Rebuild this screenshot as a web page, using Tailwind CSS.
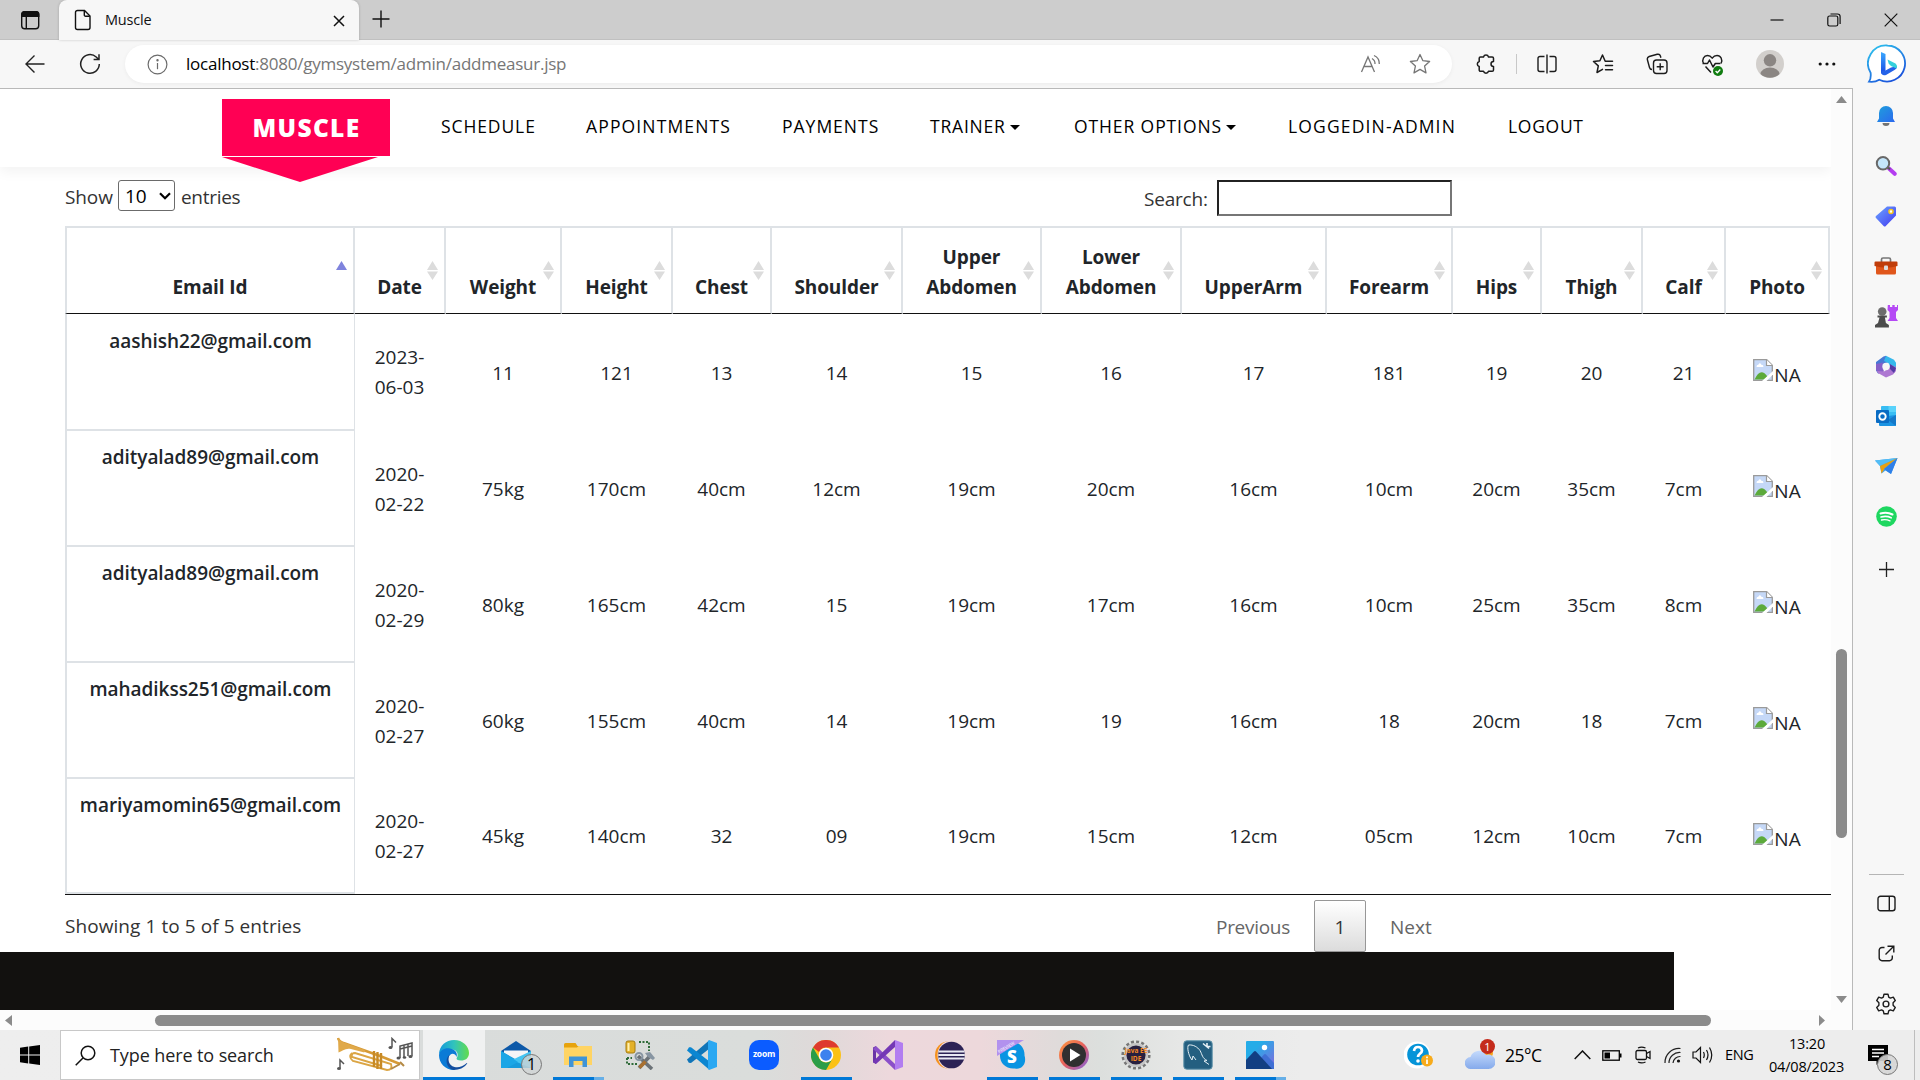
<!DOCTYPE html>
<html lang="en">
<head>
<meta charset="utf-8">
<title>Muscle</title>
<script src="https://cdn.jsdelivr.net/npm/@tailwindcss/browser@4"></script>
</head>
<body class="w-[1920px] h-[1080px] overflow-hidden flex flex-col bg-[#f7f7f7] font-['Open_Sans','Noto_Sans',sans-serif] text-[#212529]">

<!-- Tab strip -->
<div class="h-10 shrink-0 flex bg-[#cdcdcd] border-b border-[#c0c0c0]">
  <div class="w-[59px] flex items-center pl-[20px]">
    <svg class="w-5 h-5" viewBox="0 0 20 20" fill="none" stroke="#111" stroke-width="1.4"><rect x="1.7" y="1.7" width="17" height="17" rx="3"/><path d="M2 5.2V4a2.3 2.3 0 0 1 2.3-2.3h12A2.3 2.3 0 0 1 18.700 4v2.300H2z" fill="#111"/><path d="M6.300 6v12.500"/></svg>
  </div>
  <div class="w-[300px] h-10 bg-[#f7f7f7] rounded-t-lg flex items-center shadow-[0_0_3px_#0003]">
    <svg class="w-5 h-[22px] ml-[14px]" viewBox="0 0 20 22" fill="none" stroke="#111" stroke-width="1.400"><path d="M4.500 1.500h7l5.500 5.500v11.500a2 2 0 0 1-2 2H4.500a2 2 0 0 1-2-2v-15a2 2 0 0 1 2-2z"/><path d="M11.300 1.800V6a1.200 1.200 0 0 0 1.200 1.200h4.300"/></svg>
    <span class="ml-[12px] text-[14.500px] tracking-[-0.2px] text-[#111] w-[228px]">Muscle</span>
    <svg class="w-3 h-3 mt-px" viewBox="0 0 12 12" stroke="#111" stroke-width="1.500"><path d="M1 1l10 10M11 1L1 11"/></svg>
  </div>
  <svg class="w-[18px] h-[18px] ml-[13px] mt-[10px]" viewBox="0 0 18 18" stroke="#111" stroke-width="1.400"><path d="M9 .5v17M.5 9h17"/></svg>
  <div class="ml-auto flex items-center h-10 pr-[22px] gap-[43px]">
    <svg class="w-[14px] h-[14px]" viewBox="0 0 14 14" stroke="#111" stroke-width="1.200"><path d="M.5 7h13"/></svg>
    <svg class="w-[14px] h-[14px]" viewBox="0 0 14 14" fill="none" stroke="#111" stroke-width="1.200"><rect x=".8" y="3" width="10" height="10" rx="1.800"/><path d="M3.500 1h7a2.600 2.600 0 0 1 2.600 2.600V11"/></svg>
    <svg class="w-[14px] h-[14px]" viewBox="0 0 14 14" stroke="#111" stroke-width="1.200"><path d="M.7.7l12.600 12.600M13.300.7L.7 13.300"/></svg>
  </div>
</div>

<!-- Everything between tab strip and taskbar -->
<div class="h-[990px] shrink-0 flex">
  <div class="w-[1853px] shrink-0 flex flex-col">
    <!-- Address toolbar -->
    <div class="h-12 shrink-0 flex items-center">
      <svg class="w-5 h-5 ml-[25px] -mt-[1px]" viewBox="0 0 20 20" fill="none" stroke="#222" stroke-width="1.400"><path d="M19.500 10H1M9.500 1.500L1 10l8.500 8.500"/></svg>
      <svg class="w-[22px] h-[22px] ml-[34px]" viewBox="0 0 22 22" fill="none" stroke="#222" stroke-width="1.500"><path d="M20.300 11a9.300 9.300 0 1 1-3.100-7l2.600 2.500M20 1.200v5.400h-5.400"/></svg>
      <div class="ml-[24px] w-[1327px] h-[38px] bg-white rounded-full shadow-[0_1px_4px_#0000000d] flex items-center">
        <svg class="w-[21px] h-[21px] ml-[22px]" viewBox="0 0 21 21" fill="none" stroke="#6b6b6b" stroke-width="1.200"><circle cx="10.500" cy="10.500" r="9.400"/><path d="M10.500 9v6.200" /><circle cx="10.500" cy="6.200" r=".6" fill="#6b6b6b"/></svg>
        <span class="ml-[18px] w-[1174px] pb-px text-[17px] tracking-[-0.240px] text-[#767676] whitespace-nowrap"><span class="text-black">localhost</span>:8080/gymsystem/admin/addmeasur.jsp</span>
        <svg class="w-[22px] h-[20px] shrink-0" viewBox="0 0 22 20" fill="none" stroke="#767676" stroke-width="1.300"><path d="M1.500 18L8 3l6.500 15M4 12.500h8M12 4.500a6 6 0 0 1 3 5.500M14 1.500a9 9 0 0 1 5.300 8.500"/></svg>
        <svg class="w-[22px] h-[22px] ml-[27px] shrink-0" viewBox="0 0 22 22" fill="none" stroke="#767676" stroke-width="1.300" stroke-linejoin="round"><path d="M11 1.500l2.900 6.200 6.700.8-5 4.600 1.400 6.800-6-3.500-6 3.500 1.400-6.800-5-4.600 6.700-.8z"/></svg>
      </div>
      <!-- toolbar buttons -->
      <svg class="w-[22px] h-[22px] ml-[23px]" viewBox="0 0 22 22" fill="none" stroke="#1c1c1c" stroke-width="1.500" stroke-linejoin="round"><path d="M5.500 4h3a2.600 2.600 0 0 1 5 0h3.700a1.300 1.300 0 0 1 1.300 1.300V8.500a2.500 2.500 0 1 0 0 5v3.500a1.300 1.300 0 0 1-1.300 1.300h-3.700a2.600 2.600 0 0 1-5 0h-3A1.300 1.300 0 0 1 4.200 17v-3.500a2.600 2.600 0 0 1 0-5V5.300A1.300 1.300 0 0 1 5.500 4z"/></svg>
      <div class="w-px h-5 bg-[#c8c8c8] ml-[19px]"></div>
      <svg class="w-[22px] h-[20px] ml-[19px]" viewBox="0 0 22 20" fill="none" stroke="#1c1c1c" stroke-width="1.400"><path d="M8.500 2.500H4a2 2 0 0 0-2 2v11a2 2 0 0 0 2 2h4.500M13.500 2.500H18a2 2 0 0 1 2 2v11a2 2 0 0 1-2 2h-4.500M11 .5v19"/></svg>
      <svg class="w-[22px] h-[22px] ml-[34px]" viewBox="0 0 22 22" fill="none" stroke="#1c1c1c" stroke-width="1.500" stroke-linejoin="round" stroke-linecap="round"><path d="M13.200 8.200L10.500 2 7.900 7.800 1.500 8.500l4.800 4.400L5 19.500l5.500-3.200M13.500 8.200h7M13.500 12.500h7M13.500 16.800h7"/></svg>
      <svg class="w-[22px] h-[22px] ml-[32px]" viewBox="0 0 22 22" fill="none" stroke="#1c1c1c" stroke-width="1.400"><rect x="7.500" y="7" width="13.500" height="13.500" rx="3"/><path d="M14.200 10.200v7M10.700 13.700h7M6 16.500c-1.500 0-2.200-.8-2.500-2L1.400 6.800C1 5 1.700 4 3.200 3.500l8-2.200c1.600-.4 2.800.3 3.200 1.700l.5 1.700"/></svg>
      <svg class="w-[23px] h-[23px] ml-[33px]" viewBox="0 0 23 23" fill="none" stroke="#1c1c1c" stroke-width="1.500" stroke-linejoin="round"><path d="M2.500 10.500C.5 6.500 3 2.500 6.500 2.500c2 0 3.500 1 4.700 2.600C12.400 3.500 14 2.500 16 2.500c3.700 0 6 4 4 8M1.500 10.500h5l2-3.500 3.500 7 2.300-3.500h5M4.500 13.500l5.500 6"/><circle cx="17" cy="18" r="5" fill="#107c10" stroke="none"/><path d="M14.600 18l1.700 1.700 3-3.200" stroke="#fff" stroke-width="1.300"/></svg>
      <svg class="w-7 h-7 ml-[32px]" viewBox="0 0 28 28"><circle cx="14" cy="14" r="14" fill="#d2cfcc"/><circle cx="14" cy="10.300" r="6.200" fill="#8b8683"/><path d="M4.500 24a9.500 6.500 0 0 1 19 0A14 14 0 0 1 4.500 24z" fill="#8b8683"/></svg>
      <svg class="w-[18px] h-1 ml-[34px]" viewBox="0 0 18 4" fill="#111"><circle cx="2.200" cy="2" r="1.600"/><circle cx="9" cy="2" r="1.600"/><circle cx="15.800" cy="2" r="1.600"/></svg>
    </div>

    <!-- Viewport -->
    <div class="h-[942px] shrink-0 flex flex-col border-t border-r border-[#b9b9b9] bg-[#fcfcfc]">
      <div class="h-[921px] shrink-0 flex">
        <main class="w-[1831px] h-[921px] shrink-0 overflow-hidden bg-white flex flex-col">
          <!-- Site header -->
          <header class="relative z-10 h-[78px] shrink-0 bg-white shadow-[0_5px_12px_#0000000d] flex pl-[222px]">
            <div class="relative mt-[10px] w-[168px] h-[57px] bg-[#ff0054] flex items-center justify-center">
              <span class="text-white font-extrabold text-[24.500px] tracking-[1.300px] leading-none pt-[2px] pl-px">MUSCLE</span>
              <svg class="absolute left-0 top-[58px] w-[156px] h-[25px]" viewBox="0 0 156 25"><path d="M0 0h156L78 25z" fill="#ff0054"/></svg>
            </div>
            <nav class="flex h-[76px] items-center ml-[51px] text-[17.500px] font-medium text-black whitespace-nowrap tracking-[1.150px] leading-none">
              <a class="w-[145px] tracking-[0.900px]">SCHEDULE</a>
              <a class="w-[196px]">APPOINTMENTS</a>
              <a class="w-[148px] tracking-[1px]">PAYMENTS</a>
              <a class="w-[144px] flex items-center tracking-[0.800px]">TRAINER<i class="ml-[4px] border-x-[5px] border-x-transparent border-t-[5px] border-t-black"></i></a>
              <a class="w-[214px] flex items-center tracking-[0.900px]">OTHER OPTIONS<i class="ml-[4px] border-x-[5px] border-x-transparent border-t-[5px] border-t-black"></i></a>
              <a class="w-[220px]">LOGGEDIN-ADMIN</a>
              <a class="tracking-[0.700px]">LOGOUT</a>
            </nav>
          </header>

          <!-- Length + search controls -->
          <div class="h-[59px] shrink-0 flex pl-[65px] pt-[13px] text-[19px] text-[#333]">
            <span class="w-[53px] leading-[34px] tracking-[-0.1px]">Show</span>
            <div class="w-[57px] h-[31px] border border-[#6b6b6b] rounded-[3px] bg-white text-black flex items-center pl-[6px]">
              <span class="w-[34px] leading-none pt-[2px]">10</span>
              <svg class="w-[12px] h-[8px]" viewBox="0 0 12 8" fill="none" stroke="#000" stroke-width="2.200"><path d="M1 1.200l5 5 5-5"/></svg>
            </div>
            <span class="ml-[6px] w-[963px] leading-[34px] tracking-[-0.3px]">entries</span>
            <span class="w-[73px] leading-[38px] tracking-[-0.2px]">Search:</span>
            <div class="w-[235px] h-[36px] bg-white border-2 border-t-[#222] border-l-[#222] border-b-[#767676] border-r-[#767676]"></div>
          </div>

          <table class="ml-[65px] w-[1765px] shrink-0 table-fixed border-separate border-spacing-0 text-[19px] leading-[30px] text-center">
            <colgroup>
              <col class="w-[290px]"><col class="w-[91px]"><col class="w-[116px]"><col class="w-[111px]"><col class="w-[99px]"><col class="w-[131px]"><col class="w-[139px]"><col class="w-[140px]"><col class="w-[145px]"><col class="w-[126px]"><col class="w-[89px]"><col class="w-[101px]"><col class="w-[83px]"><col class="w-[104px]">
            </colgroup>
            <thead><tr id="head"></tr></thead>
            <tbody id="rows"></tbody>
          </table>

          <!-- Info + pagination -->
          <div class="ml-[65px] h-[58px] shrink-0 flex border-t border-[#111] text-[19px] text-[#333]">
            <span class="w-[1151px] leading-[62px] tracking-[0.070px]">Showing 1 to 5 of 5 entries</span>
            <span class="w-[98px] leading-[64px] text-[#666] tracking-[-0.3px]">Previous</span>
            <div class="mt-[5px] w-[52px] h-[52px] border border-[#979797] rounded-[2px] bg-linear-to-b from-white to-[#dcdcdc] text-center leading-[53px]">1</div>
            <span class="ml-[24px] leading-[64px] text-[#666]">Next</span>
          </div>
          <div class="w-[1674px] h-[58px] shrink-0 bg-[#12110f]"></div>
        </main>
        <!-- vertical scrollbar -->
        <div class="w-[21px] flex flex-col items-center pt-[7px]">
          <svg class="w-[11px] h-[7px]" viewBox="0 0 11 7"><path d="M5.500 0L11 7H0z" fill="#8b8b8b"/></svg>
          <div class="mt-[546px] w-[11px] h-[189px] rounded-full bg-[#8b8b8b]"></div>
          <svg class="mt-[158px] w-[11px] h-[7px]" viewBox="0 0 11 7"><path d="M0 0h11L5.500 7z" fill="#8b8b8b"/></svg>
        </div>
      </div>
      <!-- horizontal scrollbar -->
      <div class="h-5 flex items-center">
        <svg class="ml-[5px] w-[7px] h-[11px]" viewBox="0 0 7 11"><path d="M7 0v11L0 5.500z" fill="#8b8b8b"/></svg>
        <div class="ml-[143px] w-[1556px] h-[11px] rounded-full bg-[#8b8b8b]"></div>
        <svg class="ml-[108px] w-[6px] h-[11px]" viewBox="0 0 6 11"><path d="M0 0v11l6-5.500z" fill="#8b8b8b"/></svg>
      </div>
    </div>
  </div>

  <!-- Browser sidebar -->
  <aside class="w-[67px] flex flex-col items-center pr-px">
    <svg class="w-10 h-[41px] mt-[4px] mb-[6px] ml-px shrink-0" viewBox="0 0 40 41">
      <defs><linearGradient id="bg1" x1="0" y1="0" x2="0.600" y2="1"><stop offset="0" stop-color="#2fc8ee"/><stop offset="1" stop-color="#1b55dc"/></linearGradient><linearGradient id="bg2" x1="0" y1="0" x2="0" y2="1"><stop offset="0" stop-color="#3aa9ff"/><stop offset="1" stop-color="#174ae4"/></linearGradient></defs>
      <path d="M20.500 1.500a18 18 0 1 1-8.300 34.200c-3 2-6 2.500-10.200 2 2-3 2-6 1.600-9A18 18 0 0 1 20.500 1.500z" fill="#fff" stroke="url(#bg1)" stroke-width="1.800"/>
      <path d="M14 8l4.500 2v17l-4.500 2.700z" fill="url(#bg2)"/><path d="M18.500 26.500L24 23.500l6-1.500c0 2-1 3.200-2.500 4L19 31c-3 1.200-5-.7-5-3.500z" fill="#2462e8"/><path d="M20.500 15.500l8 4c1.500 1.500 2 3 1 5L24 22l-2.300-2.200z" fill="#35d0dc"/>
    </svg>
    <div class="h-[50px] shrink-0 flex items-center"><svg class="w-[22px] h-[22px]" viewBox="0 0 22 22"><defs><linearGradient id="be" x1="0" y1="0" x2="1" y2="1"><stop offset="0" stop-color="#1fa0dc"/><stop offset="1" stop-color="#2b68ee"/></linearGradient></defs><path d="M11 1a7 7 0 0 1 7 7v5.500l2 3.500H2l2-3.500V8a7 7 0 0 1 7-7z" fill="url(#be)"/><path d="M7.500 18h7a3.500 3 0 0 1-7 0z" fill="#737373"/></svg></div>
    <div class="h-[50px] shrink-0 flex items-center"><svg class="w-[22px] h-[22px]" viewBox="0 0 22 22"><path d="M14 13.500l5.700 5.300" stroke="#b43df0" stroke-width="4" stroke-linecap="round"/><path d="M12.500 12l2.500 2.500" stroke="#555" stroke-width="2"/><circle cx="8" cy="8.300" r="6.200" fill="#c4e6fb" stroke="#686868" stroke-width="2"/></svg></div>
    <div class="h-[50px] shrink-0 flex items-center"><svg class="w-[22px] h-[22px]" viewBox="0 0 22 22"><defs><linearGradient id="tg" x1="0" y1="0" x2="1" y2="1"><stop offset="0" stop-color="#6aa5ff"/><stop offset="1" stop-color="#4338f0"/></linearGradient></defs><path d="M12 1.500h7.500A1.500 1.500 0 0 1 21 3v7.500L10.800 21a1.500 1.500 0 0 1-2.200 0L1 13a1.500 1.500 0 0 1 0-2z" fill="url(#tg)"/><circle cx="16" cy="6.500" r="2" fill="#fff" stroke="#f6c51d" stroke-width="1.600"/></svg></div>
    <div class="h-[50px] shrink-0 flex items-center"><svg class="w-[24px] h-[20px]" viewBox="0 0 24 20"><path d="M7.500 6V3.500a1.500 1.500 0 0 1 1.500-1.500h6a1.500 1.500 0 0 1 1.500 1.500V6" fill="none" stroke="#777" stroke-width="1.700"/><path d="M2 9h20v8a1.500 1.500 0 0 1-1.500 1.500h-17A1.500 1.500 0 0 1 2 17z" fill="#e0561b"/><path d="M1.500 5.500h21a1 1 0 0 1 1 1V10q-11 3.500-23 0V6.500a1 1 0 0 1 1-1z" fill="#c03d0a"/><rect x="10" y="9.500" width="4" height="4.500" rx="1" fill="#ddd"/></svg></div>
    <div class="h-[50px] shrink-0 flex items-center"><svg class="w-[24px] h-[24px]" viewBox="0 0 24 24"><path d="M13.800 1h2.200v2h2.300V1h2.400v2H23V1h1v5l-2 2v6l2 3H13.500l2-3V8l-2-2z" fill="#b549f5"/><circle cx="8.200" cy="7.500" r="4.300" fill="#6c6c6c"/><path d="M3.500 11.500h9.400v2h-2l1 5.500 3 2v2.500H1V21l3-2 1.500-5.500h-2z" fill="#4c4c4c"/></svg></div>
    <div class="h-[50px] shrink-0 flex items-center"><svg class="w-[22px] h-[23px]" viewBox="0 0 22 23"><path d="M1 7L8.500 1.500 11 .8l2 6.200-5 3v7l-5 1.500-2-3z" fill="#4678d4"/><path d="M1 9v6l2.500 3.500L9 16.500l-1.500-5L8 7.500z" fill="#8560c8"/><path d="M11 .8l8 4 2 3v6l-6-1-1.500-4.500L9 6z" fill="#35b8ec"/><path d="M21 12v4l-3 3.500-7 3-8-4.500-1-2 7 .5 5-3.500 1-3.500z" fill="#ae78d2"/><path d="M15 9l6 4-2 5-4-4z" fill="#523ba5"/><circle cx="11" cy="11.500" r="3.700" fill="#f7f7f7"/></svg></div>
    <div class="h-[50px] shrink-0 flex items-center"><svg class="w-[22px] h-[22px]" viewBox="0 0 22 22"><rect x="6" y="1" width="15" height="13" rx="1" fill="#38bdf3"/><path d="M13.500 1H20a1 1 0 0 1 1 1v5h-7.500z" fill="#58d2fb"/><path d="M4 12l17-2v10a1 1 0 0 1-1 1H5a1 1 0 0 1-1-1z" fill="#1a93e2"/><path d="M21 10v11l-8-6z" fill="#1478c9"/><rect x="1" y="5" width="13" height="13" rx="1" fill="#0a6cc4"/><circle cx="7.500" cy="11.500" r="3.200" fill="none" stroke="#fff" stroke-width="1.900"/></svg></div>
    <div class="h-[50px] shrink-0 flex items-center"><svg class="w-[23px] h-[18px]" viewBox="0 0 23 18"><path d="M0 3.500L22.500 1 16 17l-5.500-3.500-4 3L5 9z" fill="#3da3f0"/><path d="M0 3.500L22.500 1 5 9z" fill="#53bdf5"/><path d="M22.500 1L5 9l1.500 7.500L10 11z" fill="#e8a012"/><path d="M22.500 1L16 17l-7-5z" fill="#2f7fe8"/></svg></div>
    <div class="h-[50px] shrink-0 flex items-center"><svg class="w-[21px] h-[21px]" viewBox="0 0 21 21" fill="none" stroke="#fff" stroke-linecap="round"><circle cx="10.500" cy="10.500" r="10.300" fill="#1ed760" stroke="none"/><path d="M4.500 7.500q6.500-2 12 1" stroke-width="2"/><path d="M5 11q5.500-1.500 10.200.8" stroke-width="1.600"/><path d="M5.500 14q4.500-1 8.500.9" stroke-width="1.300"/></svg></div>
    <svg class="mt-[21px] w-[15px] h-[15px] shrink-0" viewBox="0 0 15 15" stroke="#222" stroke-width="1.300"><path d="M7.500 0v15M0 7.500h15"/></svg>
    <div class="mt-auto w-[35px] h-px bg-[#b5b5b5] mb-[3px]"></div>
    <div class="h-[50px] shrink-0 flex items-center"><svg class="w-[19px] h-[17px]" viewBox="0 0 19 17" fill="none" stroke="#1c1c1c" stroke-width="1.400"><rect x="1" y="1.200" width="17" height="14.500" rx="2.500"/><path d="M12.300 1v15"/></svg></div>
    <div class="h-[50px] shrink-0 flex items-center"><svg class="w-[17px] h-[17px]" viewBox="0 0 17 17" fill="none" stroke="#1c1c1c" stroke-width="1.400"><path d="M6.500 2.500H4A2.800 2.800 0 0 0 1.200 5.300v7.500A2.800 2.800 0 0 0 4 15.700h7.500a2.800 2.800 0 0 0 2.800-2.900V10.500M9.500 1.200h6.300v6.300M15.500 1.500L7.500 9.500"/></svg></div>
    <div class="h-[52px] pb-[1px] shrink-0 flex items-center"><svg class="w-[22px] h-[22px]" viewBox="0 0 22 22" fill="none" stroke="#1c1c1c" stroke-width="1.400" stroke-linejoin="round"><path d="M9 1.200h4l.7 2.900 1.700 1 2.900-.9 2 3.400-2.200 2.100v2.600l2.200 2.100-2 3.400-2.900-.9-1.700 1-.7 2.900H9l-.7-2.900-1.700-1-2.900.9-2-3.400 2.200-2.100V9.700L1.700 7.600l2-3.400 2.900.9 1.700-1z"/><circle cx="11" cy="11" r="2.900"/></svg></div>
  </aside>
</div>

<!-- Taskbar -->
<footer class="h-[50px] shrink-0 flex bg-linear-to-r from-[#eeeeee] from-0% via-[#ececec] via-65% to-[#eeeeee]">
  <div class="w-[60px] flex items-center justify-center shrink-0"><svg class="w-5 h-5" viewBox="0 0 20 20" fill="#000"><path d="M0 2.800l8.200-1.200v7.900H0zM9.200 1.400L20 0v9.500H9.200zM0 10.500h8.200v7.900L0 17.200zM9.200 10.500H20V20L9.200 18.600z"/></svg></div>
  <div class="w-[360px] shrink-0 bg-white border border-[#c8c8c8] flex items-center">
    <svg class="w-[21px] h-[21px] ml-[14px]" viewBox="0 0 21 21" fill="none" stroke="#111" stroke-width="1.500"><circle cx="13" cy="8" r="6.800"/><path d="M8.200 12.800L.7 20.300"/></svg>
    <span class="ml-[14px] w-[227px] text-[18px] text-[#222] tracking-[-0.1px] whitespace-nowrap">Type here to search</span>
    <svg class="w-[77px] h-[36px]" viewBox="0 0 77 36" fill="none"><path d="M1 1q1 4 7 5.500L43 19l20 8" stroke="#d69a35" stroke-width="2.500"/><path d="M1 .5C3 5 8 5.500 14 8l14 5-.7 2.500L14 12C9 10.500 5 14 1.500 15.500z" fill="#e0a94a"/><path d="M15 16q-4 4 1 8l34 9q6 0 4-6L18 16q-4 0-3 4l30 9" stroke="#dba544" stroke-width="1.900"/><path d="M37 14v16M40.500 15v17M44 16v16" stroke="#c78a26" stroke-width="2.400"/><path d="M54 32l9-5M63 25l4 4" stroke="#b58a45" stroke-width="2"/><g stroke="#555" stroke-width="1.500"><path d="M55 10V1.500l4 4M63 21V9l12-3v13M67 20V8M71 19V7M63 12l12-3M3 31v-8l4 4"/></g><g fill="#555"><ellipse cx="53.500" cy="10.500" rx="2" ry="1.500"/><ellipse cx="61.500" cy="21" rx="2" ry="1.500"/><ellipse cx="67.500" cy="20.500" rx="1.800" ry="1.300"/><ellipse cx="73.500" cy="19.500" rx="2" ry="1.500"/><ellipse cx="2" cy="31.500" rx="2" ry="1.500"/></g></svg>
  </div>
  <!-- pinned and running applications -->
  <div class="w-[880px] shrink-0 flex pl-[3px] bg-[linear-gradient(90deg,#d9dcdb_0,#dadddb_340px,#dfd9d9_400px,#edd8dc_470px,#edd8db_560px,#dfdbda_640px,#dcdfdd_680px,#e6e7e6_760px,#ececec_880px)]">
    <div class="relative w-[62px] flex items-center justify-center bg-[#f0f1f1] border-b-[3px] border-[#0078d7] pt-[3px]"><svg class="w-[30px] h-[30px]" viewBox="0 0 30 30"><defs><linearGradient id="ed" x1="0" y1="0.300" x2="1" y2="0.300"><stop offset="0" stop-color="#1399dc"/><stop offset=".5" stop-color="#31c3bc"/><stop offset="1" stop-color="#63dc4c"/></linearGradient></defs><path d="M0 14C.5 5.500 7 0 15 0c9 0 15 6.500 15 13 0 5-3.500 7.500-8 7.500-3.500 0-5-1-4.300-2.500 2.800-4.500-.7-8.800-5.700-8.800C6 9.200 2 12 0 14z" fill="url(#ed)"/><path d="M0 15C1 10 6 7.700 11 8.500c5 .8 8 4.500 6.500 8.500-1-3-4-4-6.200-2.300-3.300 2.500-3 8.500 1.200 12 2 1.700 4 3 2.500 3.300C6 30 0 23 0 15z" fill="#0b7bd6"/><path d="M11 14.500c-3 4-1.500 11 4.500 12.500 4 1 8-.3 12-3.800.5-.5 1 0 .5.600C25 28 20 30 15 30 9 29 6.500 23 8 18.500c.7-2 1.700-3.200 3-4z" fill="#134d9e"/></svg></div>
    <div class="relative w-[62px] flex items-center justify-center"><svg class="w-[30px] h-[30px]" viewBox="0 0 30 30"><path d="M0 11L15 1l15 10v17H0z" fill="#0d59a8"/><path d="M3 10.500h24v9L15 23 3 19z" fill="#f4f5f7"/><path d="M0 11l30 17H0z" fill="#179bdc"/><path d="M30 11v17L11 20z" fill="#43c4f2"/><path d="M0 28V11l17 11-11 6z" fill="#1ba6e6"/></svg><span class="absolute left-[36px] top-[24px] w-[21px] h-[21px] rounded-full border border-[#777] bg-[#d0d5d5]/80 text-black text-[16px] leading-[19px] text-center">1</span></div>
    <div class="relative w-[62px] flex items-center justify-center"><svg class="w-[28px] h-[24px]" viewBox="0 0 28 24"><path d="M0 1.500A1.500 1.500 0 0 1 1.500 0h10l2 3H28v18H0z" fill="#e7a30d"/><path d="M0 4.500h13l1.500-1.500H28v19H0z" fill="#ffd463"/><path d="M5 13.500h18V24h-4.500v-6h-9v6H5z" fill="#3f94d7"/></svg><i class="absolute bottom-0 left-[6px] w-[41px] h-[3px] bg-[#0078d7]"></i><i class="absolute bottom-0 left-[47px] w-[10px] h-[3px] bg-[#66afe7]"></i></div>
    <div class="w-[62px] flex items-center justify-center"><svg class="w-[30px] h-[30px]" viewBox="0 0 30 30"><rect x="1" y="1" width="9" height="12" rx="2" fill="#e3b12a" stroke="#a67c10"/><path d="M3.500 3v8" stroke="#fff0b0" stroke-width="2"/><path d="M14 2h10v9M2 18v6h10M2 18h5" stroke="#2e6b39" stroke-width="2" stroke-dasharray="2 1.500" fill="none"/><path d="M14 28l11-12M13 16l14 13" stroke="#6b7277" stroke-width="3.600"/><path d="M14.500 27.500l6-6" stroke="#a9702f" stroke-width="3.600"/><path d="M20 13l5-1 5 6-2 2-5-3z" fill="#8795a2"/><circle cx="14" cy="16.500" r="3.500" fill="none" stroke="#8795a2" stroke-width="2"/></svg></div>
    <div class="w-[62px] flex items-center justify-center"><svg class="w-[30px] h-[30px]" viewBox="0 0 30 30"><path d="M22 .5L0 19.500l1.800 3.200L4 23 22.500 8.500z" fill="#1075b8"/><path d="M0 10.500L2 7.300l2-.1L22.500 21.500 22 29.500z" fill="#0b86d1"/><path d="M22 0l8 3v24l-8 3-1-1.200V1.200z" fill="#2aa8f2"/></svg></div>
    <div class="w-[62px] flex items-center justify-center"><div class="w-[30px] h-[30px] rounded-[10px] bg-[#0b5cff] text-white text-[8.500px] font-bold leading-[28px] text-center tracking-[-0.2px]">zoom</div></div>
    <div class="relative w-[62px] flex items-center justify-center"><svg class="w-[30px] h-[30px]" viewBox="0 0 30 30"><circle cx="15" cy="15" r="15" fill="#fbc116"/><path d="M2 7.500A15 15 0 0 1 28 7.500H15A7.500 7.500 0 0 0 8 12z" fill="#de3a2e"/><path d="M2 7.500A15 15 0 0 0 15 30l6.500-11.200A7.500 7.500 0 0 1 8.500 18.800z" fill="#2a9d48"/><circle cx="15" cy="15" r="7.300" fill="#fff"/><circle cx="15" cy="15" r="5.800" fill="#3c82ee"/></svg><i class="absolute bottom-0 left-[6px] w-[51px] h-[3px] bg-[#0078d7]"></i></div>
    <div class="w-[62px] flex items-center justify-center"><svg class="w-[30px] h-[30px]" viewBox="0 0 30 30"><path d="M0 7.500l3-1.500v18l-3-1.500z" fill="#6a34a6"/><path d="M3 6l19 18v6L0 9z" fill="#8b4fc9"/><path d="M3 24L22 7V0L0 21.500z" fill="#7437b5"/><path d="M22 0l8 3v24l-8 3z" fill="#b27df0"/></svg></div>
    <div class="w-[62px] flex items-center justify-center"><svg class="w-[30px] h-[28px]" viewBox="0 0 30 28"><ellipse cx="13" cy="14" rx="13" ry="13.500" fill="#f6921e"/><ellipse cx="15" cy="14" rx="12.500" ry="14" fill="#eed8dc"/><circle cx="16.500" cy="14" r="13.300" fill="#2c2255"/><path d="M3.500 10.500h26M3.300 14h26.500M3.500 17.500h26" stroke="#e8e8f2" stroke-width="1.800"/></svg></div>
    <div class="relative w-[62px] flex items-center justify-center"><div class="relative w-[30px] h-[30px]"><svg class="absolute inset-0" viewBox="0 0 30 30"><path d="M3 9a8 8 0 0 1 9-7c9-1.500 16 5 15.500 13.500C30 23 25 30 18 28.500 9 29.500 2.500 23 3 15z" fill="#0a94e2"/><path d="M0 0h27L0 16z" fill="#b291ee"/></svg><span class="absolute left-[10px] top-[10px] text-white font-extrabold text-[17px] leading-[14px]">S</span><span class="absolute left-0 top-[5px] text-white text-[4.500px] leading-none -rotate-[30deg]">PREVIEW</span></div><i class="absolute bottom-0 left-[6px] w-[51px] h-[3px] bg-[#0078d7]"></i></div>
    <div class="relative w-[62px] flex items-center justify-center"><svg class="w-[30px] h-[30px]" viewBox="0 0 30 30"><defs><linearGradient id="mp" x1="0" y1="0" x2="1" y2="1"><stop offset="0" stop-color="#ff9a3c"/><stop offset=".5" stop-color="#e5605e"/><stop offset="1" stop-color="#7d62e6"/></linearGradient></defs><circle cx="15" cy="15" r="15" fill="url(#mp)"/><circle cx="15" cy="15" r="12" fill="#303030"/><path d="M11 8.500l10.500 6.500L11 21.500z" fill="#fff"/></svg><i class="absolute bottom-0 left-[6px] w-[51px] h-[3px] bg-[#0078d7]"></i></div>
    <div class="relative w-[62px] flex items-center justify-center"><div class="relative w-[30px] h-[30px]"><svg class="absolute inset-0" viewBox="0 0 30 30"><circle cx="15" cy="15" r="13.300" fill="none" stroke="#777" stroke-width="2.600" stroke-dasharray="3 2.200"/><circle cx="15" cy="15" r="10.800" fill="#28203f" stroke="#c5c5c5" stroke-width="2.400"/></svg><span class="absolute inset-x-0 top-[7px] text-[#f58a25] text-[6.500px] font-bold leading-[7.500px] text-center whitespace-nowrap">Java EE<br>IDE</span></div><i class="absolute bottom-0 left-[6px] w-[51px] h-[3px] bg-[#0078d7]"></i></div>
    <div class="relative w-[62px] flex items-center justify-center"><svg class="w-[30px] h-[30px]" viewBox="0 0 30 30" fill="none" stroke="#e5f0f5" stroke-width="1"><rect x=".8" y=".8" width="28.400" height="28.400" rx="3" fill="#245f80" stroke="#5f93aa"/><path d="M9 20C5 15 4 7 5.500 5c5-.5 9 2 11.500 5.500 2.500 4.500 2 7.500 7 10l-3 .5 5 3.500M9 20l1-4 3 4"/><path d="M20 3.500l6 5M24 3v3.500h3.500" stroke-width="1.600"/></svg><i class="absolute bottom-0 left-[6px] w-[51px] h-[3px] bg-[#0078d7]"></i></div>
    <div class="relative w-[62px] flex items-center justify-center"><svg class="w-[28px] h-[28px]" viewBox="0 0 28 28"><defs><linearGradient id="ph" x1="0" y1="0" x2="1" y2="1"><stop offset=".3" stop-color="#25ace8"/><stop offset="1" stop-color="#8667dc"/></linearGradient></defs><rect width="28" height="28" rx="1" fill="url(#ph)"/><path d="M13 19l5-5.500q1-.8 2 0l8 8.500v6H13z" fill="#3f6fd4"/><path d="M0 19l8-8.500q1-1 2 0L26 28H0z" fill="#123f82"/><circle cx="18.500" cy="6.500" r="2.700" fill="#fff"/></svg><i class="absolute bottom-0 left-[6px] w-[41px] h-[3px] bg-[#0078d7]"></i><i class="absolute bottom-0 left-[47px] w-[10px] h-[3px] bg-[#66afe7]"></i></div>
  </div>
  <!-- tray -->
  <div class="flex-1 flex items-center text-black bg-[#ededed]">
    <svg class="ml-[104px] w-[30px] h-[28px]" viewBox="0 0 30 28"><circle cx="13" cy="14" r="13.500" fill="#fff"/><circle cx="14" cy="13.500" r="10.800" fill="#0594d8"/><path d="M10 10q.5-4 4-4t4 3.500c0 3-4 3-4 6.500" fill="none" stroke="#fff" stroke-width="2.700"/><circle cx="14" cy="20" r="1.800" fill="#fff"/><circle cx="23" cy="19.500" r="6" fill="#f7ab1b"/><path d="M23 18.500v4.500M23 15.500v1.800" stroke="#fff" stroke-width="1.700"/></svg>
    <div class="relative ml-[31px] w-[30px] h-[30px]"><svg class="w-[30px] h-[30px]" viewBox="0 0 30 30"><defs><linearGradient id="cl" x1="0" y1="0" x2="0" y2="1"><stop offset="0" stop-color="#c4dafc"/><stop offset="1" stop-color="#85aaeb"/></linearGradient></defs><circle cx="22" cy="13" r="6" fill="#f7a41c"/><path d="M6 29a6 6 0 0 1-.5-12A8.500 8.500 0 0 1 21 15a7.200 7.200 0 1 1 2 14z" fill="url(#cl)"/></svg><span class="absolute left-[15px] -top-[1px] w-[15px] h-[15px] rounded-full bg-[#c42b1c] text-white text-[11px] leading-[15px] text-center">1</span></div>
    <span class="ml-[10px] w-[69px] text-[17.500px] tracking-[-0.5px]">25°C</span>
    <svg class="w-[17px] h-[10px]" viewBox="0 0 17 10" fill="none" stroke="#111" stroke-width="1.500"><path d="M.7 9l7.800-8 7.800 8"/></svg>
    <svg class="ml-[11px] w-[20px] h-[11px]" viewBox="0 0 20 11"><rect x=".8" y=".8" width="16.500" height="9.400" fill="none" stroke="#000" stroke-width="1.300"/><path d="M2.500 2.500H8v6H2.500zM17.500 3.500h2v4h-2z"/></svg>
    <svg class="ml-[13px] w-[17px] h-[18px]" viewBox="0 0 17 18" fill="none" stroke="#111" stroke-width="1.300"><rect x="1" y="4.500" width="10.500" height="9" rx="1.500"/><path d="M11.500 7.500l3.500-2v7l-3.500-2M3 2q3.500-1.800 7.500 0M3 16q3.500 1.800 7.500 0"/></svg>
    <svg class="ml-[12px] w-[18px] h-[17px]" viewBox="0 0 18 17" fill="none" stroke="#222" stroke-width="1.200"><path d="M1 16A14 14 0 0 1 16.500 1.500M5 16A10.500 10.500 0 0 1 16.500 5.500M9 16a7 7 0 0 1 7.500-6.500"/><circle cx="14.500" cy="14" r="1.600" fill="#111" stroke="none"/></svg>
    <svg class="ml-[10px] w-[22px] h-[18px]" viewBox="0 0 22 18" fill="none" stroke="#111" stroke-width="1.200"><path d="M1 6h3l4.500-4.500v15L4 12H1zM11.500 6q1.500 3 0 6M14.500 4q3 5 0 10M17.500 1.500q4.500 7.500 0 15"/></svg>
    <span class="ml-[11px] w-[40px] text-[14.500px] tracking-[-0.4px]">ENG</span>
    <div class="w-[84px] text-center text-[14.500px] leading-[23px] tracking-[-0.2px] whitespace-nowrap"><div>13:20</div><div class="-ml-px">04/08/2023</div></div>
    <div class="relative ml-[19px] w-[20px] h-[20px]"><svg class="w-5 h-5" viewBox="0 0 20 20"><path d="M0 0h20v16H12l-3.500 4V16H0z"/><path d="M4 4.500h12M4 8h12M4 11.500h7" stroke="#fff" stroke-width="1.300"/></svg><span class="absolute left-[9px] top-[9px] w-[21px] h-[21px] rounded-full border border-[#777] bg-[#d5d5d5]/90 text-[15px] leading-[19px] text-center">8</span></div>
    <div class="ml-auto mr-[5px] w-px h-[50px] bg-[#bdbdbd]"></div>
  </div>
</footer>

<script>
  const headings = ['Email Id', 'Date', 'Weight', 'Height', 'Chest', 'Shoulder', 'Upper<br>Abdomen', 'Lower<br>Abdomen', 'UpperArm', 'Forearm', 'Hips', 'Thigh', 'Calf', 'Photo'];
  const rows = [
    ['aashish22@gmail.com', '2023-<br>06-03', '11', '121', '13', '14', '15', '16', '17', '181', '19', '20', '21'],
    ['adityalad89@gmail.com', '2020-<br>02-22', '75kg', '170cm', '40cm', '12cm', '19cm', '20cm', '16cm', '10cm', '20cm', '35cm', '7cm'],
    ['adityalad89@gmail.com', '2020-<br>02-29', '80kg', '165cm', '42cm', '15', '19cm', '17cm', '16cm', '10cm', '25cm', '35cm', '8cm'],
    ['mahadikss251@gmail.com', '2020-<br>02-27', '60kg', '155cm', '40cm', '14', '19cm', '19', '16cm', '18', '20cm', '18', '7cm'],
    ['mariyamomin65@gmail.com', '2020-<br>02-27', '45kg', '140cm', '32', '09', '19cm', '15cm', '12cm', '05cm', '12cm', '10cm', '7cm']
  ];
  const up = '<svg class="absolute right-[6px] top-[33px] w-[11px] h-[20px]" viewBox="0 0 11 20"><path d="M5.500 0L11 9H0z" fill="#7f83dd"/></svg>';
  const both = '<svg class="absolute right-[6px] top-[33px] w-[11px] h-[20px]" viewBox="0 0 11 20"><path d="M5.500 0L11 9H0zM0 10.500h11L5.500 19z" fill="#dcdcdc"/></svg>';
  const broken = '<span class="inline-flex items-start h-[28px] relative top-[1px]"><svg class="w-[20px] h-[22px]" viewBox="0 0 20 22"><path d="M.7.7h13l5.600 5.600v15H.7z" fill="#c5d8f7" stroke="#9a9a9a" stroke-width="1.300"/><path d="M13.500.7v5.800h5.800" fill="#fff" stroke="#9a9a9a" stroke-width="1.200"/><path d="M3.500 8h7q0-2.500-2.200-2.300Q7 3 5.300 5.700 3.500 5.700 3.500 8z" fill="#fff"/><path d="M1.500 20.500q6-13 13-3l-3 3z" fill="#5caa3b"/><path d="M9 22L20 12v3.500L13.500 22z" fill="#fff"/></svg><span class="ml-[1px] mt-[1px]">NA</span></span>';

  document.getElementById('head').innerHTML = headings.map((h, i) =>
    `<th class="relative h-[88px] align-bottom pb-[11px] font-bold tracking-[-0.1px] border-t-2 border-r-2 border-t-[#dee2e6] border-r-[#dee2e6] border-b border-b-[#111] ${i === 0 ? 'border-l-2 border-l-[#dee2e6]' : ''}">${h}${i === 0 ? up : both}</th>`).join('');

  document.getElementById('rows').innerHTML = rows.map((r, n) => {
    const size = n === 0 ? 'h-[117px] pt-[12px]' : n === rows.length - 1 ? 'h-[115px] pt-[11px]' : 'h-[116px] pt-[11px]';
    return '<tr>' + r.map((v, i) => i === 0
      ? `<th class="${size} align-top font-semibold tracking-[-0.05px] border-l-2 border-b-2 border-r border-[#dee2e6]">${v}</th>`
      : `<td class="align-middle pr-[2px] ${i === 1 ? 'pb-[1px]' : n === 0 ? '' : 'pb-[1px]'}">${v}</td>`).join('') +
      `<td class="align-middle pr-[2px]">${broken}</td></tr>`;
  }).join('');
</script>
</body>
</html>
